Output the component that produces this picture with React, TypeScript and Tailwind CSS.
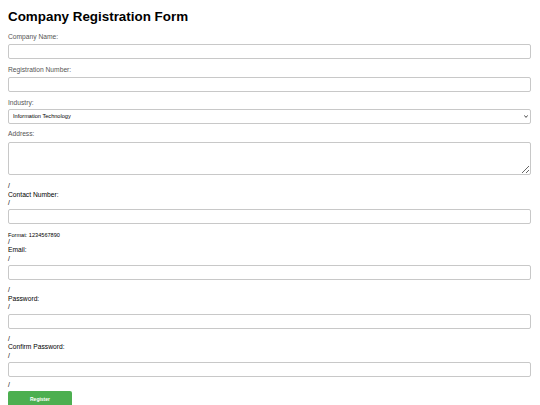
import React from 'react';

const fieldClass =
  'block w-full h-[15px] border border-[#c8c8c8] rounded-[2px] bg-white px-[3px] text-[6.7px] outline-none';

const Slash: React.FC<{ className?: string }> = ({ className = '' }) => (
  <div className={`text-[6.7px] leading-[8.5px] text-black ${className}`}>/</div>
);

const App: React.FC = () => {
  return (
    <div className="h-[405px] bg-white font-['Liberation_Sans',Arial,sans-serif] px-[8px] text-black overflow-hidden">
      <h1 className="pt-[8px] text-[13.4px] leading-[18px] font-bold text-black">Company Registration Form</h1>

      <form className="w-full pr-[1px]" onSubmit={(e) => e.preventDefault()}>
        {/* styled part */}
        <label className="block mt-[7px] text-[6.7px] leading-[8px] text-[#555]">Company Name:</label>
        <input type="text" className={`${fieldClass} mt-[3px]`} />

        <label className="block mt-[7px] text-[6.7px] leading-[8px] text-[#555]">Registration Number:</label>
        <input type="text" className={`${fieldClass} mt-[3px]`} />

        <label className="block mt-[7px] text-[6.7px] leading-[8px] text-[#555]">Industry:</label>
        <div className="relative mt-[2px]">
          <select
            defaultValue="it"
            className="block w-full h-[15px] appearance-none border border-[#c8c8c8] rounded-[2px] bg-white pl-[4px] text-[5.6px] text-black outline-none"
          >
            <option value="it">Information Technology</option>
            <option value="finance">Finance</option>
            <option value="health">Healthcare</option>
          </select>
          <svg
            className="absolute right-[3px] top-[6px] pointer-events-none"
            width="4"
            height="3"
            viewBox="0 0 4 3"
          >
            <path d="M0.3 0.4 L2 2.4 L3.7 0.4" fill="none" stroke="#333" strokeWidth="0.9" />
          </svg>
        </div>

        <label className="block mt-[6px] text-[6.7px] leading-[8px] text-[#555]">Address:</label>
        <textarea className="block w-full h-[33px] mt-[4px] border border-[#c8c8c8] rounded-[2px] bg-white p-[3px] text-[6.7px] outline-none" />

        {/* broken part with stray slashes */}
        <Slash className="mt-[7px]" />
        <div className="text-[6.7px] leading-[8.5px]">Contact Number:</div>
        <Slash />
        <input type="text" className={`${fieldClass} mt-[1px]`} />
        <div className="mt-[8px] text-[5.6px] leading-[6px]">Format: 1234567890</div>

        <Slash />
        <div className="text-[6.7px] leading-[8.5px]">Email:</div>
        <Slash />
        <input type="email" className={`${fieldClass} mt-[2px]`} />

        <Slash className="mt-[6px]" />
        <div className="text-[6.7px] leading-[8.5px]">Password:</div>
        <Slash />
        <input type="password" className={`${fieldClass} mt-[2px]`} />

        <Slash className="mt-[6px]" />
        <div className="text-[6.7px] leading-[8.5px]">Confirm Password:</div>
        <Slash />
        <input type="password" className={`${fieldClass} mt-[2px]`} />

        <Slash className="mt-[4px]" />
        <button
          type="submit"
          className="block mt-[1px] w-[64px] h-[19px] rounded-[2px] bg-[#4caf50] text-white text-[5px] font-bold"
        >
          Register
        </button>
      </form>
    </div>
  );
};

export default App;
